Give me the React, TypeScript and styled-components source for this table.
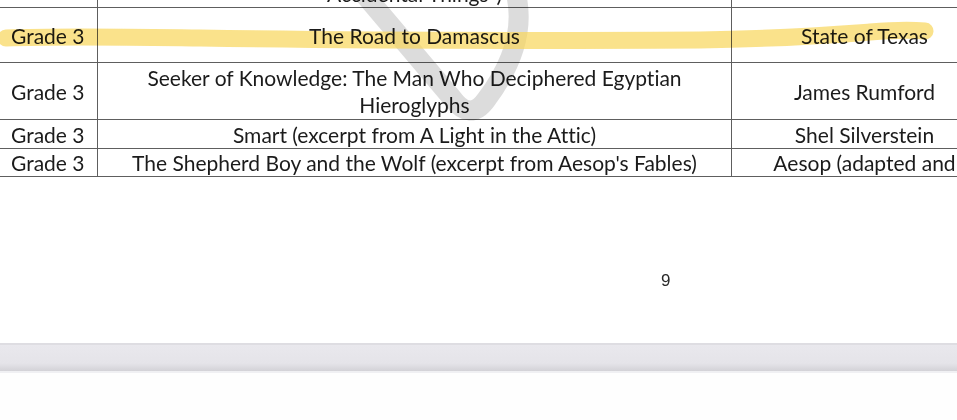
import React from "react";
import styled, { createGlobalStyle } from "styled-components";

const Global = createGlobalStyle`
  html, body { margin: 0; padding: 0; background: #ffffff; }
  body { width: 957px; height: 420px; overflow: hidden; }
`;

const Screen = styled.div`
  position: relative;
  width: 957px;
  height: 420px;
  overflow: hidden;
  background: #ffffff;
  display: flex;
  flex-direction: column;
`;

const Page = styled.div`
  height: 343px;
  overflow: hidden;
  display: flex;
  flex-direction: column;
  background: #ffffff;
`;

const Table = styled.table`
  border-collapse: collapse;
  table-layout: fixed;
  margin-top: -48px;
  margin-left: -4px;
  width: 1001px;
  font-family: Lato, "Open Sans", sans-serif;
  font-size: 21px;
  font-variant-ligatures: none;
  color: #1b1b1b;
  line-height: 27px;
`;

const Row = styled.tr<{ $h: number }>`
  height: ${(p) => p.$h}px;
`;

const Cell = styled.td<{ $align?: "left" | "center"; $valign?: "middle" | "bottom" }>`
  border: 1px solid #5e5e5e;
  padding: 0 ${(p) => (p.$align === "left" ? "0 0 14px" : "4px")};
  text-align: ${(p) => p.$align ?? "center"};
  vertical-align: ${(p) => p.$valign ?? "middle"};
  white-space: nowrap;
  overflow: hidden;
`;

const Footer = styled.div`
  flex: 1;
  display: flex;
  align-items: center;
  padding-left: 661px;
  font-family: "Liberation Sans", Arial, sans-serif;
  font-size: 17px;
  color: #2a2a2a;
`;

const FooterInner = styled.div`
  margin-top: 42px;
`;

const Divider = styled.div`
  height: 26px;
  border-top: 2px solid #dedde2;
  border-bottom: 2px solid #f0f0f3;
  background: linear-gradient(#e9e8ed 0%, #e5e4e9 70%, #d3d2d7 100%);
`;

const NextPage = styled.div`
  flex: 1;
  background: #fefefe;
`;

const Marks = styled.svg`
  position: absolute;
  left: 0;
  top: 0;
  pointer-events: none;
  mix-blend-mode: multiply;
`;

const rows = [
  { grade: "Grade 3", title: <>The Road to Damascus</>, author: "State of Texas", h: 55 },
  {
    grade: "Grade 3",
    title: (
      <>
        Seeker of Knowledge: The Man Who Deciphered Egyptian
        <br />
        Hieroglyphs
      </>
    ),
    author: "James Rumford",
    h: 57,
  },
  { grade: "Grade 3", title: <>Smart (excerpt from A Light in the Attic)</>, author: "Shel Silverstein", h: 29 },
  {
    grade: "Grade 3",
    title: <>The Shepherd Boy and the Wolf (excerpt from Aesop's Fables)</>,
    author: "Aesop (adapted and",
    h: 28,
  },
];

export default function App() {
  return (
    <>
      <Global />
      <Screen>
        <Page>
          <Table>
            <colgroup>
              <col style={{ width: 101 }} />
              <col style={{ width: 634 }} />
              <col style={{ width: 266 }} />
            </colgroup>
            <tbody>
              <Row $h={55}>
                <Cell $align="left" $valign="bottom"></Cell>
                <Cell $valign="bottom">Accidental Things")</Cell>
                <Cell $valign="bottom"></Cell>
              </Row>
              {rows.map((r, i) => (
                <Row key={i} $h={r.h}>
                  <Cell $align="left">{r.grade}</Cell>
                  <Cell>{r.title}</Cell>
                  <Cell>{r.author}</Cell>
                </Row>
              ))}
            </tbody>
          </Table>
          <Footer>
            <FooterInner>9</FooterInner>
          </Footer>
        </Page>
        <Divider />
        <NextPage />
        <Marks width="957" height="420" viewBox="0 0 957 420">
          <path
            d="M 364 -6 L 452 98 Q 470 122 486 100 Q 528 44 516 -6"
            fill="none"
            stroke="#a8a8a8"
            strokeOpacity="0.4"
            strokeWidth="20"
            strokeLinejoin="round"
          />
          <path
            d="M 6 38 C 60 36 120 37 200 38 C 320 40 500 41 700 40 C 780 39 830 35 870 32 C 895 30 912 30 925 31"
            fill="none"
            stroke="#f8d65a"
            strokeOpacity="0.7"
            strokeWidth="17"
            strokeLinecap="round"
          />
        </Marks>
      </Screen>
    </>
  );
}
